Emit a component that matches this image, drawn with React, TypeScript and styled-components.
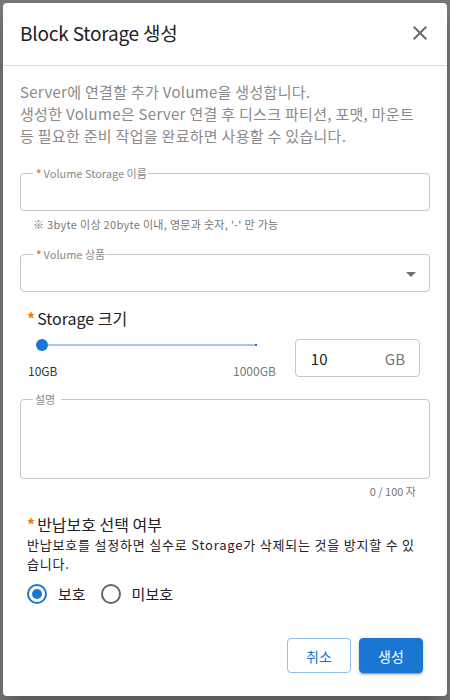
import React, { useState } from 'react';
import styled, { createGlobalStyle } from 'styled-components';

const GlobalStyle = createGlobalStyle`
    html, body {
        margin: 0;
        padding: 0;
        background: #787878;
    }
    * {
        box-sizing: border-box;
    }
    body {
        font-family: "Noto Sans CJK KR", "Noto Sans", sans-serif;
    }
`;

const Required: React.FC = () => <Star>*</Star>;

const App: React.FC = () => {
    const [protect, setProtect] = useState(true);

    return (
        <>
        <GlobalStyle />
        <Backdrop>
            <Dialog>
                <Header>
                    <Title>Block Storage 생성</Title>
                    <CloseButton aria-label="close">
                        <svg width="24" height="24" viewBox="0 0 24 24" fill="#6b6b6b">
                            <path d="M19 6.41 17.59 5 12 10.59 6.41 5 5 6.41 10.59 12 5 17.59 6.41 19 12 13.41 17.59 19 19 17.59 13.41 12z" />
                        </svg>
                    </CloseButton>
                </Header>
                <Body>
                    <Description>
                        Server에 연결할 추가 Volume을 생성합니다.<br />
                        생성한 Volume은 Server 연결 후 디스크 파티션, 포맷, 마운트 등 필요한 준비 작업을 완료하면 사용할 수 있습니다.
                    </Description>

                    <Outlined>
                        <Legend><Required />Volume Storage 이름</Legend>
                        <FieldBody />
                    </Outlined>
                    <Helper>※ 3byte 이상 20byte 이내, 영문과 숫자, '-' 만 가능</Helper>

                    <Outlined>
                        <Legend><Required />Volume 상품</Legend>
                        <SelectBox>
                            <svg width="24" height="24" viewBox="0 0 24 24" fill="#707070">
                                <path d="M7 10l5 5 5-5z" />
                            </svg>
                        </SelectBox>
                    </Outlined>

                    <Section>
                        <SectionLabel><Required />Storage 크기</SectionLabel>
                        <SizeRow>
                            <SliderBlock>
                                <SliderRoot>
                                    <Track />
                                    <TrackEnd />
                                    <Thumb />
                                </SliderRoot>
                                <SliderMarks>
                                    <span>10GB</span>
                                    <MutedMark>1000GB</MutedMark>
                                </SliderMarks>
                            </SliderBlock>
                            <SizeInput>
                                <span>10</span>
                                <Unit>GB</Unit>
                            </SizeInput>
                        </SizeRow>
                    </Section>

                    <Outlined>
                        <Legend muted>설명</Legend>
                        <TextArea />
                    </Outlined>
                    <Counter>0 / 100 자</Counter>

                    <Section>
                        <SectionLabel><Required />반납보호 선택 여부</SectionLabel>
                        <SectionText>반납보호를 설정하면 실수로 Storage가 삭제되는 것을 방지할 수 있습니다.</SectionText>
                        <RadioGroup>
                            <RadioLabel onClick={() => setProtect(true)}>
                                <RadioCircle checked={protect} />
                                보호
                            </RadioLabel>
                            <RadioLabel onClick={() => setProtect(false)}>
                                <RadioCircle checked={!protect} />
                                미보호
                            </RadioLabel>
                        </RadioGroup>
                    </Section>
                </Body>
                <Footer>
                    <Button variant="outlined">취소</Button>
                    <Button variant="contained">생성</Button>
                </Footer>
            </Dialog>
        </Backdrop>
        </>
    );
};

const Backdrop = styled.div`
    padding: 3px;
    height: 700px;
`;

const Dialog = styled.div`
    background: #fff;
    border-radius: 4px;
    height: 693px;
    display: flex;
    flex-direction: column;
    box-shadow: 0 11px 15px -7px rgba(0,0,0,0.2), 0 24px 38px 3px rgba(0,0,0,0.14);
`;

const Header = styled.div`
    height: 63px;
    display: flex;
    align-items: center;
    justify-content: space-between;
    padding: 0 15px 3px 17px;
    border-bottom: 1px solid #dcdcdc;
`;

const Title = styled.h2`
    margin: 0;
    font-size: 19px;
    font-weight: 400;
    color: #222;
    letter-spacing: -0.2px;
`;

const CloseButton = styled.button`
    border: none;
    background: none;
    padding: 0;
    display: flex;
    cursor: pointer;
`;

const Body = styled.div`
    flex: 1;
    padding: 15px 17px 0;
`;

const Description = styled.p`
    margin: 0 0 20px;
    font-size: 15px;
    line-height: 22px;
    color: #8a8a8a;
    letter-spacing: 0.3px;
`;

const Outlined = styled.fieldset`
    margin: 0;
    padding: 0 12px;
    border: 1px solid #c6c6c6;
    border-radius: 4px;
    min-width: 0;
`;

const Legend = styled.legend<{ muted?: boolean }>`
    font-size: 11px;
    line-height: 13px;
    padding: 0 ${p => (p.muted ? '6px' : '1px')} 0 ${p => (p.muted ? '2px' : '3px')};
    color: #8a8a8a;
`;

const Star = styled.span`
    color: #f07c14;
    margin-right: 2px;
    font-weight: 700;
`;

const FieldBody = styled.div`
    height: 30px;
`;

const Helper = styled.div`
    font-size: 11px;
    line-height: 14px;
    color: #777;
    padding: 6px 0 0 13px;
    margin-bottom: 17px;
    letter-spacing: 0.3px;
`;

const SelectBox = styled.div`
    height: 35px;
    display: flex;
    align-items: center;
    justify-content: flex-end;
    margin-right: -6px;
    margin-top: -5px;
`;

const Section = styled.div`
    padding: 0 10px 0 7px;
    margin-top: 16px;
`;

const SectionLabel = styled.div`
    font-size: 16px;
    line-height: 20px;
    color: #222;
`;

const SectionText = styled.div`
    font-size: 13px;
    line-height: 19px;
    color: #222;
    margin-top: 1px;
    letter-spacing: 0.8px;
`;

const SizeRow = styled.div`
    display: flex;
    align-items: flex-start;
    gap: 19px;
    margin-top: 9px;
    margin-bottom: 14px;
`;

const SliderBlock = styled.div`
    width: 251px;
`;

const SliderRoot = styled.div`
    position: relative;
    height: 16px;
    margin-left: 9px;
    width: 221px;
`;

const Track = styled.div`
    position: absolute;
    left: 7px;
    right: 0;
    top: 7px;
    height: 2px;
    background: #a3c8ef;
`;

const TrackEnd = styled.div`
    position: absolute;
    right: 0;
    top: 7px;
    width: 2px;
    height: 2px;
    background: #1976d2;
`;

const Thumb = styled.div`
    position: absolute;
    left: 0;
    top: 2px;
    width: 12px;
    height: 12px;
    border-radius: 50%;
    background: #1976d2;
`;

const SliderMarks = styled.div`
    display: flex;
    justify-content: space-between;
    font-size: 12px;
    line-height: 16px;
    color: #333;
    margin-top: 10px;
    margin-left: 1px;
`;

const MutedMark = styled.span`
    color: #777;
`;

const SizeInput = styled.div`
    width: 126px;
    height: 38px;
    border: 1px solid #c6c6c6;
    border-radius: 4px;
    display: flex;
    align-items: center;
    justify-content: space-between;
    padding: 0 14px 0 15px;
    font-size: 15px;
    color: #222;
    margin-top: 2px;
`;

const Unit = styled.span`
    color: #777;
`;

const TextArea = styled.div`
    height: 72px;
`;

const Counter = styled.div`
    text-align: right;
    font-size: 11px;
    line-height: 14px;
    color: #777;
    padding: 5px 14px 0 0;
    margin-bottom: 11px;
`;

const RadioGroup = styled.div`
    display: flex;
    gap: 15px;
    margin-top: 10px;
`;

const RadioLabel = styled.label`
    display: flex;
    align-items: center;
    gap: 11px;
    font-size: 15px;
    color: #222;
    cursor: pointer;
`;

const RadioCircle = styled.span<{ checked: boolean }>`
    width: 20px;
    height: 20px;
    border-radius: 50%;
    border: 2px solid ${p => (p.checked ? '#1976d2' : '#666')};
    display: flex;
    align-items: center;
    justify-content: center;
    &::after {
        content: '';
        width: 10px;
        height: 10px;
        border-radius: 50%;
        background: ${p => (p.checked ? '#1976d2' : 'transparent')};
    }
`;

const Footer = styled.div`
    display: flex;
    justify-content: flex-end;
    gap: 8px;
    padding: 0 24px 23px;
`;

const Button = styled.button<{ variant: 'outlined' | 'contained' }>`
    width: 64px;
    height: 35px;
    border-radius: 4px;
    font-family: inherit;
    font-size: 14px;
    cursor: pointer;
    border: 1px solid ${p => (p.variant === 'contained' ? '#1976d2' : '#8fbfee')};
    background: ${p => (p.variant === 'contained' ? '#1976d2' : '#fff')};
    color: ${p => (p.variant === 'contained' ? '#fff' : '#1976d2')};
    box-shadow: ${p => (p.variant === 'contained'
        ? '0 3px 1px -2px rgba(0,0,0,0.2), 0 2px 2px 0 rgba(0,0,0,0.14), 0 1px 5px 0 rgba(0,0,0,0.12)'
        : 'none')};
`;

export default App;
